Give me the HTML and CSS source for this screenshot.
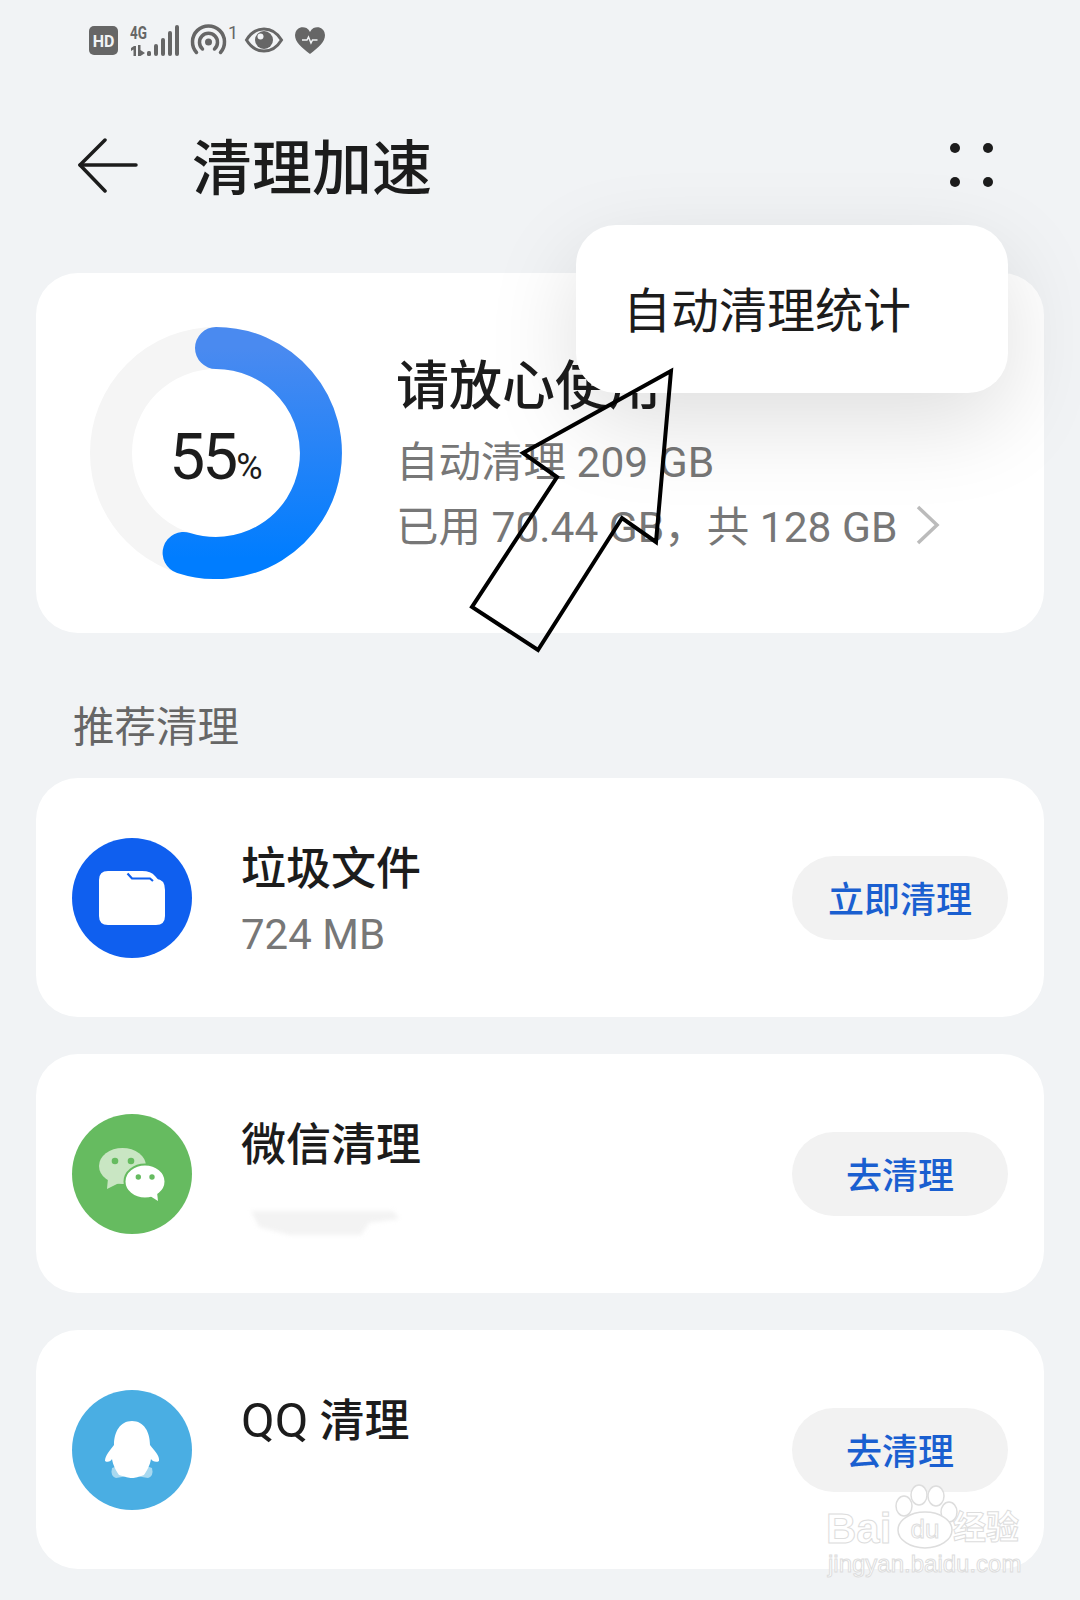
FILE: index.html
```html
<!doctype html>
<html>
<head>
<meta charset="utf-8">
<title>清理加速</title>
<link rel="stylesheet" href="styles.css">
</head>
<body>
<div id="page">
  <div class="status">
    <svg width="29" height="29" viewBox="0 0 29 29">
      <rect width="29" height="29" rx="5" fill="#666"/>
      <text x="14.5" y="21" class="hd-text" text-anchor="middle">HD</text>
    </svg>
    <svg width="49" height="31" viewBox="0 0 49 31" fill="#666">
      <text x="0" y="14" class="net-text" textLength="17" lengthAdjust="spacingAndGlyphs">4G</text>
      <path d="M1 23l3-2h2V31H3.500V24.500L1 26ZM8 20h2.500V25l4.500 3-4.500 3H8Z"/>
      <rect x="17" y="26" width="4" height="5" rx="1.500"/>
      <rect x="24" y="19" width="4" height="12" rx="2"/>
      <rect x="31" y="13" width="4" height="18" rx="2"/>
      <rect x="38" y="6" width="4" height="25" rx="2"/>
      <rect x="45" y="0" width="4" height="31" rx="2"/>
    </svg>
    <svg class="hotspot" width="46" height="32" viewBox="0 0 46 32" fill="none" stroke="#666" stroke-width="3.500" stroke-linecap="round">
      <path d="M5.500 28.500A16 16 0 1 1 29.500 28.500"/>
      <path d="M11.500 25A9 9 0 1 1 23.500 25"/>
      <circle cx="17.500" cy="18" r="3.500" fill="#666" stroke="none"/>
      <text x="37" y="15" class="sup-text" fill="#666" stroke="none">1</text>
    </svg>
    <svg width="38" height="26" viewBox="0 0 38 26">
      <path d="M1.500 13C6 5.500 12 2 19 2s13 3.500 17.500 11C32 20.500 26 24 19 24S6 20.500 1.500 13Z" fill="none" stroke="#666" stroke-width="3"/>
      <circle cx="19" cy="13" r="9" fill="#666"/>
      <circle cx="15.500" cy="9.500" r="3" fill="#f1f3f5"/>
    </svg>
    <svg width="30" height="27" viewBox="0 0 30 27">
      <path d="M15 27C6 20 0 15 0 8a7.800 7.800 0 0 1 15-3 7.800 7.800 0 0 1 15 3c0 7-6 12-15 19Z" fill="#666"/>
      <path d="M7 13h5l1.500-3 2.500 6 1.500-3h5" fill="none" stroke="#f1f3f5" stroke-width="1.500"/>
    </svg>
  </div>

  <div class="header">
    <svg class="back" width="60" height="56" viewBox="0 0 60 56" fill="none" stroke="#1c1c1c" stroke-width="3.500" stroke-linecap="round" stroke-linejoin="round">
      <path d="M27 2L2 27L27 53"/>
      <path d="M2 27H58"/>
    </svg>
    <h1>清理加速</h1>
    <div class="dots"><i></i><i></i><i></i><i></i></div>
  </div>

  <div class="card summary">
    <div class="ring">
      <svg width="252" height="252" viewBox="0 0 252 252" fill="none">
        <defs>
          <linearGradient id="arc" x1="0" y1="0" x2="0" y2="1">
            <stop offset="0" stop-color="#4a8af0"/>
            <stop offset="1" stop-color="#007dff"/>
          </linearGradient>
        </defs>
        <circle cx="126" cy="126" r="105" stroke="#f5f5f5" stroke-width="42"/>
        <path d="M126 21A105 105 0 1 1 93.600 225.900" stroke="url(#arc)" stroke-width="42" stroke-linecap="round"/>
      </svg>
      <div class="ring-label">55<small>%</small></div>
    </div>
    <div class="summary-text">
      <div class="summary-title">请放心使用</div>
      <div class="summary-line">自动清理 209 GB</div>
      <div class="summary-line">已用 70.44 GB，共 128 GB
        <svg class="chevron" width="24" height="40" viewBox="0 0 24 40" fill="none" stroke="#bbb" stroke-width="3.500">
          <path d="M2 2L21 20L2 38"/>
        </svg>
      </div>
    </div>
  </div>

  <div class="section">推荐清理</div>

  <div class="list">
    <div class="card item">
      <svg class="icon" width="120" height="120" viewBox="0 0 120 120">
        <circle cx="60" cy="60" r="60" fill="#0f5fef"/>
        <path d="M36 33H45Q49 33 52 36L56 41H84Q93 41 93 52V78Q93 87 84 87H36Q27 87 27 78V42Q27 33 36 33Z" fill="#fff"/>
        <path d="M44 33H70Q79 33 83 38L90 46H50Z" fill="#fff"/>
        <path d="M55.500 35.500L60 40.500H78L81 43" fill="none" stroke="#0f5fef" stroke-width="2.200"/>
      </svg>
      <div class="item-text">
        <div class="item-title">垃圾文件</div>
        <div class="item-sub">724 MB</div>
      </div>
      <div class="btn">立即清理</div>
    </div>

    <div class="card item">
      <svg class="icon" width="120" height="120" viewBox="0 0 120 120">
        <circle cx="60" cy="60" r="60" fill="#66bb60"/>
        <ellipse cx="50.500" cy="52" rx="23.500" ry="18" fill="#c9e6c3"/>
        <path d="M36 64L35 75L47 69Z" fill="#c9e6c3"/>
        <circle cx="43" cy="47" r="3.300" fill="#66bb60"/>
        <circle cx="59" cy="47" r="3.300" fill="#66bb60"/>
        <ellipse cx="73" cy="67.500" rx="20.500" ry="17" fill="#fff" stroke="#66bb60" stroke-width="2"/>
        <path d="M78 82L86 87L85 78Z" fill="#fff"/>
        <circle cx="66.300" cy="63" r="2.700" fill="#66bb60"/>
        <circle cx="80" cy="63" r="2.700" fill="#66bb60"/>
      </svg>
      <div class="item-text">
        <div class="item-title">微信清理</div>
        <div class="item-sub">
          <svg class="smear" width="160" height="40" viewBox="0 0 160 40">
            <path d="M4 8H146L152 16L122 20L114 32H42L12 24Z" fill="#f3f3f3"/>
          </svg>
        </div>
      </div>
      <div class="btn">去清理</div>
    </div>

    <div class="card item">
      <svg class="icon" width="120" height="120" viewBox="0 0 120 120">
        <circle cx="60" cy="60" r="60" fill="#4aaee3"/>
        <path d="M40 78L46 76L56 86L44 88Q38 86 40 78Z" fill="#a8d9f0"/>
        <path d="M80 78L74 76L64 86L76 88Q82 86 80 78Z" fill="#a8d9f0"/>
        <path d="M60 31C72 31 78 42 78 55C82 60 88 66 87 71C84 73 80 71 79 69C78 76 74 82 72 85C66 87 64 88 60 88C56 88 54 87 47 85C45 82 41 76 40 69C39 71 36 73 33 71C33 66 38 60 42 55C42 42 48 31 60 31Z" fill="#fff"/>
      </svg>
      <div class="item-text">
        <div class="item-title"><span class="latin">QQ</span> 清理</div>
        <div class="item-sub"></div>
      </div>
      <div class="btn">去清理</div>
    </div>
  </div>

  <div class="menu">自动清理统计</div>

  <svg class="arrow" width="1080" height="1600" viewBox="0 0 1080 1600">
    <path d="M671 371L523 453L557 477L472 607L538 650L622 518L656 542Z" fill="none" stroke="#000" stroke-width="4"/>
  </svg>

  <div class="mark">
    <span class="mark-bai">Bai</span>
    <svg class="mark-paw" width="70" height="66" viewBox="0 0 70 66" fill="#fff" stroke="#ddd" stroke-width="1.500">
      <ellipse cx="12" cy="22" rx="8" ry="10"/>
      <ellipse cx="27" cy="11" rx="8" ry="10"/>
      <ellipse cx="44" cy="12" rx="8" ry="10"/>
      <ellipse cx="57" cy="28" rx="8" ry="10"/>
      <ellipse cx="33" cy="46" rx="27" ry="18"/>
      <text x="33" y="54" class="mark-du" text-anchor="middle">du</text>
    </svg>
    <span class="mark-cn">经验</span>
    <span class="mark-url">jingyan.baidu.com</span>
  </div>
</div>
</body>
</html>
```

FILE: styles.css
```css
html, body {
  border: 0;
  margin: 0;
  padding: 0;
}
body {
  font-family: Roboto, "Noto Sans CJK SC", sans-serif;
  background: #f1f3f5;
  color: #1c1c1c;
}
#page {
  position: relative;
  width: 1080px;
  height: 1600px;
  overflow: hidden;
}

/* status bar */
.status {
  display: flex;
  align-items: center;
  gap: 12px;
  height: 32px;
  padding: 24px 0 0 89px;
}
.status svg {
  overflow: visible;
}
.hotspot {
  margin-right: -4px;
}
.hd-text {
  font-family: Roboto, sans-serif;
  font-size: 16px;
  font-weight: 700;
  fill: #f1f3f5;
}
.net-text {
  font-family: Roboto, sans-serif;
  font-size: 18px;
  font-weight: 700;
}
.sup-text {
  font-family: Roboto, sans-serif;
  font-size: 18px;
}

/* header */
.header {
  display: flex;
  align-items: center;
  height: 100px;
  margin-top: 60px;
  padding: 0 87px 0 78px;
}
.header h1 {
  flex: 1;
  margin: 0 0 0 54px;
  padding-top: 8px;
  font-size: 60px;
  font-weight: 500;
  line-height: 92px;
}
.dots {
  display: grid;
  grid-template-columns: 10px 10px;
  gap: 24px 23px;
  margin-top: -3px;
}
.dots i {
  width: 10px;
  height: 10px;
  border-radius: 50%;
  background: #1c1c1c;
}

/* cards */
.card {
  margin: 0 36px;
  border-radius: 42px;
  background: #fff;
}
.summary {
  display: flex;
  align-items: center;
  gap: 54px;
  height: 360px;
  margin-top: 57px;
  padding-left: 54px;
}
.ring {
  position: relative;
  width: 252px;
  height: 252px;
}
.ring-label {
  position: absolute;
  top: 0;
  left: 0;
  right: 0;
  bottom: 0;
  display: flex;
  align-items: baseline;
  justify-content: center;
  font-size: 64px;
  font-weight: 400;
  line-height: 262px;
  letter-spacing: -3px;
}
.ring-label small {
  margin-left: 1px;
  font-size: 36px;
  letter-spacing: 0;
}
.summary-text {
  padding-top: 3px;
}
.summary-title {
  margin-bottom: 6px;
  font-size: 53px;
  font-weight: 500;
  line-height: 74px;
}
.summary-line {
  display: flex;
  align-items: center;
  gap: 19px;
  font-size: 42.500px;
  line-height: 65px;
  color: #777;
}
.chevron {
  margin-top: -5px;
}
.section {
  margin-top: 65px;
  padding-left: 73px;
  font-size: 41.500px;
  line-height: 60px;
  color: #666;
}
.list {
  display: flex;
  flex-direction: column;
  gap: 37px;
  margin-top: 20px;
}
.item {
  display: flex;
  align-items: center;
  gap: 48px;
  height: 239px;
  padding: 0 36px;
}
.icon {
  flex: none;
  margin-right: 1px;
}
.item-text {
  flex: 1;
  padding-top: 10px;
}
.item-title {
  font-size: 45px;
  font-weight: 500;
  line-height: 64px;
}
.latin {
  font-size: 49px;
  font-weight: 400;
}
.item-sub {
  display: flow-root;
  height: 66px;
  font-size: 42px;
  line-height: 66px;
  color: #777;
}
.smear {
  display: block;
  margin: 25px 0 0 6px;
  filter: blur(2px);
}
.btn {
  width: 216px;
  height: 84px;
  overflow: hidden;
  border-radius: 42px;
  background: #f2f2f2;
  font-size: 36px;
  font-weight: 500;
  line-height: 90px;
  text-align: center;
  color: #1a5fd0;
}

/* popup menu, lies over the summary card */
.menu {
  position: absolute;
  top: 225px;
  left: 576px;
  width: 385px;
  height: 168px;
  padding-left: 47px;
  border-radius: 40px;
  background: #fff;
  box-shadow: 0 30px 90px rgba(0, 0, 0, .13);
  font-size: 48px;
  line-height: 174px;
}

/* hand drawn arrow on top of the screenshot */
.arrow {
  position: absolute;
  top: 0;
  left: 0;
}

/* watermark */
.mark {
  position: absolute;
  top: 1484px;
  left: 826px;
  width: 200px;
  height: 96px;
}
.mark-bai, .mark-cn, .mark-url {
  position: absolute;
  color: #fff;
  -webkit-text-stroke: 1px #ddd;
  white-space: nowrap;
}
.mark-bai {
  top: 22px;
  left: 0;
  font-family: "Liberation Sans", sans-serif;
  font-size: 42px;
  font-weight: 700;
  line-height: 46px;
}
.mark-paw {
  position: absolute;
  top: 0;
  left: 66px;
}
.mark-du {
  font-family: "Liberation Sans", sans-serif;
  font-size: 26px;
  stroke-width: 1;
}
.mark-cn {
  top: 24px;
  left: 127px;
  font-size: 33px;
  font-weight: 700;
  line-height: 40px;
}
.mark-url {
  top: 68px;
  left: 2px;
  font-family: "Liberation Sans", sans-serif;
  font-size: 24px;
  line-height: 24px;
}
```
